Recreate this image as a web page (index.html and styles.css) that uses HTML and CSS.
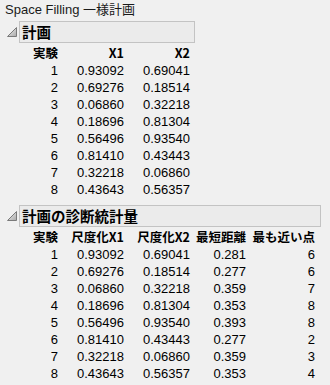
FILE: index.html
```html
<!DOCTYPE html>
<html lang="ja">
<head>
<meta charset="utf-8">
<link rel="stylesheet" href="styles.css">
</head>
<body>
<div class="report">
  <div class="title">Space Filling 一様計画</div>

  <section class="outline">
    <div class="outline-head">
      <svg class="toggle" width="10" height="10" viewBox="0 0 10 10"><defs><linearGradient id="g1" x1="0" y1="0" x2="1" y2="1"><stop offset="0" stop-color="#f4f4f4"/><stop offset="1" stop-color="#a8a8a8"/></linearGradient></defs><polygon points="9.5,0.5 9.5,9.5 0.5,9.5" fill="url(#g1)" stroke="#7a7a7a" stroke-width="1"/></svg>
      <div class="outline-box narrow">計画</div>
    </div>
    <div class="grid g3">
      <div class="h">実験</div><div class="h">X1</div><div class="h">X2</div>
      <div>1</div><div>0.93092</div><div>0.69041</div>
      <div>2</div><div>0.69276</div><div>0.18514</div>
      <div>3</div><div>0.06860</div><div>0.32218</div>
      <div>4</div><div>0.18696</div><div>0.81304</div>
      <div>5</div><div>0.56496</div><div>0.93540</div>
      <div>6</div><div>0.81410</div><div>0.43443</div>
      <div>7</div><div>0.32218</div><div>0.06860</div>
      <div>8</div><div>0.43643</div><div>0.56357</div>
    </div>
  </section>

  <section class="outline second">
    <div class="outline-head">
      <svg class="toggle" width="10" height="10" viewBox="0 0 10 10"><defs><linearGradient id="g2" x1="0" y1="0" x2="1" y2="1"><stop offset="0" stop-color="#f4f4f4"/><stop offset="1" stop-color="#a8a8a8"/></linearGradient></defs><polygon points="9.5,0.5 9.5,9.5 0.5,9.5" fill="url(#g2)" stroke="#7a7a7a" stroke-width="1"/></svg>
      <div class="outline-box wide">計画の診断統計量</div>
    </div>
    <div class="grid g5">
      <div class="h">実験</div><div class="h">尺度化X1</div><div class="h">尺度化X2</div><div class="h">最短距離</div><div class="h">最も近い点</div>
      <div>1</div><div>0.93092</div><div>0.69041</div><div>0.281</div><div>6</div>
      <div>2</div><div>0.69276</div><div>0.18514</div><div>0.277</div><div>6</div>
      <div>3</div><div>0.06860</div><div>0.32218</div><div>0.359</div><div>7</div>
      <div>4</div><div>0.18696</div><div>0.81304</div><div>0.353</div><div>8</div>
      <div>5</div><div>0.56496</div><div>0.93540</div><div>0.393</div><div>8</div>
      <div>6</div><div>0.81410</div><div>0.43443</div><div>0.277</div><div>2</div>
      <div>7</div><div>0.32218</div><div>0.06860</div><div>0.359</div><div>3</div>
      <div>8</div><div>0.43643</div><div>0.56357</div><div>0.353</div><div>4</div>
    </div>
  </section>
</div>
</body>
</html>
```

FILE: styles.css
```css
html, body {
  margin: 0;
  padding: 0;
  background: #f0f0f0;
}
body {
  font-family: "Liberation Sans", "Noto Sans CJK JP", sans-serif;
  font-size: 13px;
  color: #000;
}
.report {
  display: flex;
  flex-direction: column;
}
.title {
  height: 20px;
  line-height: 20px;
  padding-left: 5px;
  color: #1a1a1a;
}
.outline {
  display: flex;
  flex-direction: column;
  margin-top: 1px;
}
.outline.second {
  margin-top: 7px;
}
.outline-head {
  display: flex;
  align-items: center;
  height: 22px;
}
.toggle {
  margin-left: 7px;
  margin-right: 2px;
  margin-top: -1px;
}
.outline-box {
  box-sizing: border-box;
  height: 22px;
  line-height: 20px;
  border: 1px solid #c3c3c3;
  background: #ebebeb;
  font-family: "Noto Sans CJK JP", sans-serif;
  font-weight: bold;
  font-size: 14.5px;
  padding-left: 2px;
  color: #000;
}
.outline-box.narrow { width: 176px; }
.outline-box.wide { width: 302px; }
.grid {
  display: grid;
  padding-left: 30px;
  grid-auto-rows: 17px;
  line-height: 17px;
  text-align: right;
}
.grid .h {
  font-family: "Noto Sans CJK JP", sans-serif;
  font-weight: bold;
  font-size: 12.5px;
  height: 19px;
  line-height: 19px;
  white-space: nowrap;
}
.g3 {
  grid-template-columns: 28px 66px 66px;
  grid-template-rows: 19px;
}
.g5 {
  grid-template-columns: 28px 66px 66px 56px 69px;
  grid-template-rows: 19px;
}
```
